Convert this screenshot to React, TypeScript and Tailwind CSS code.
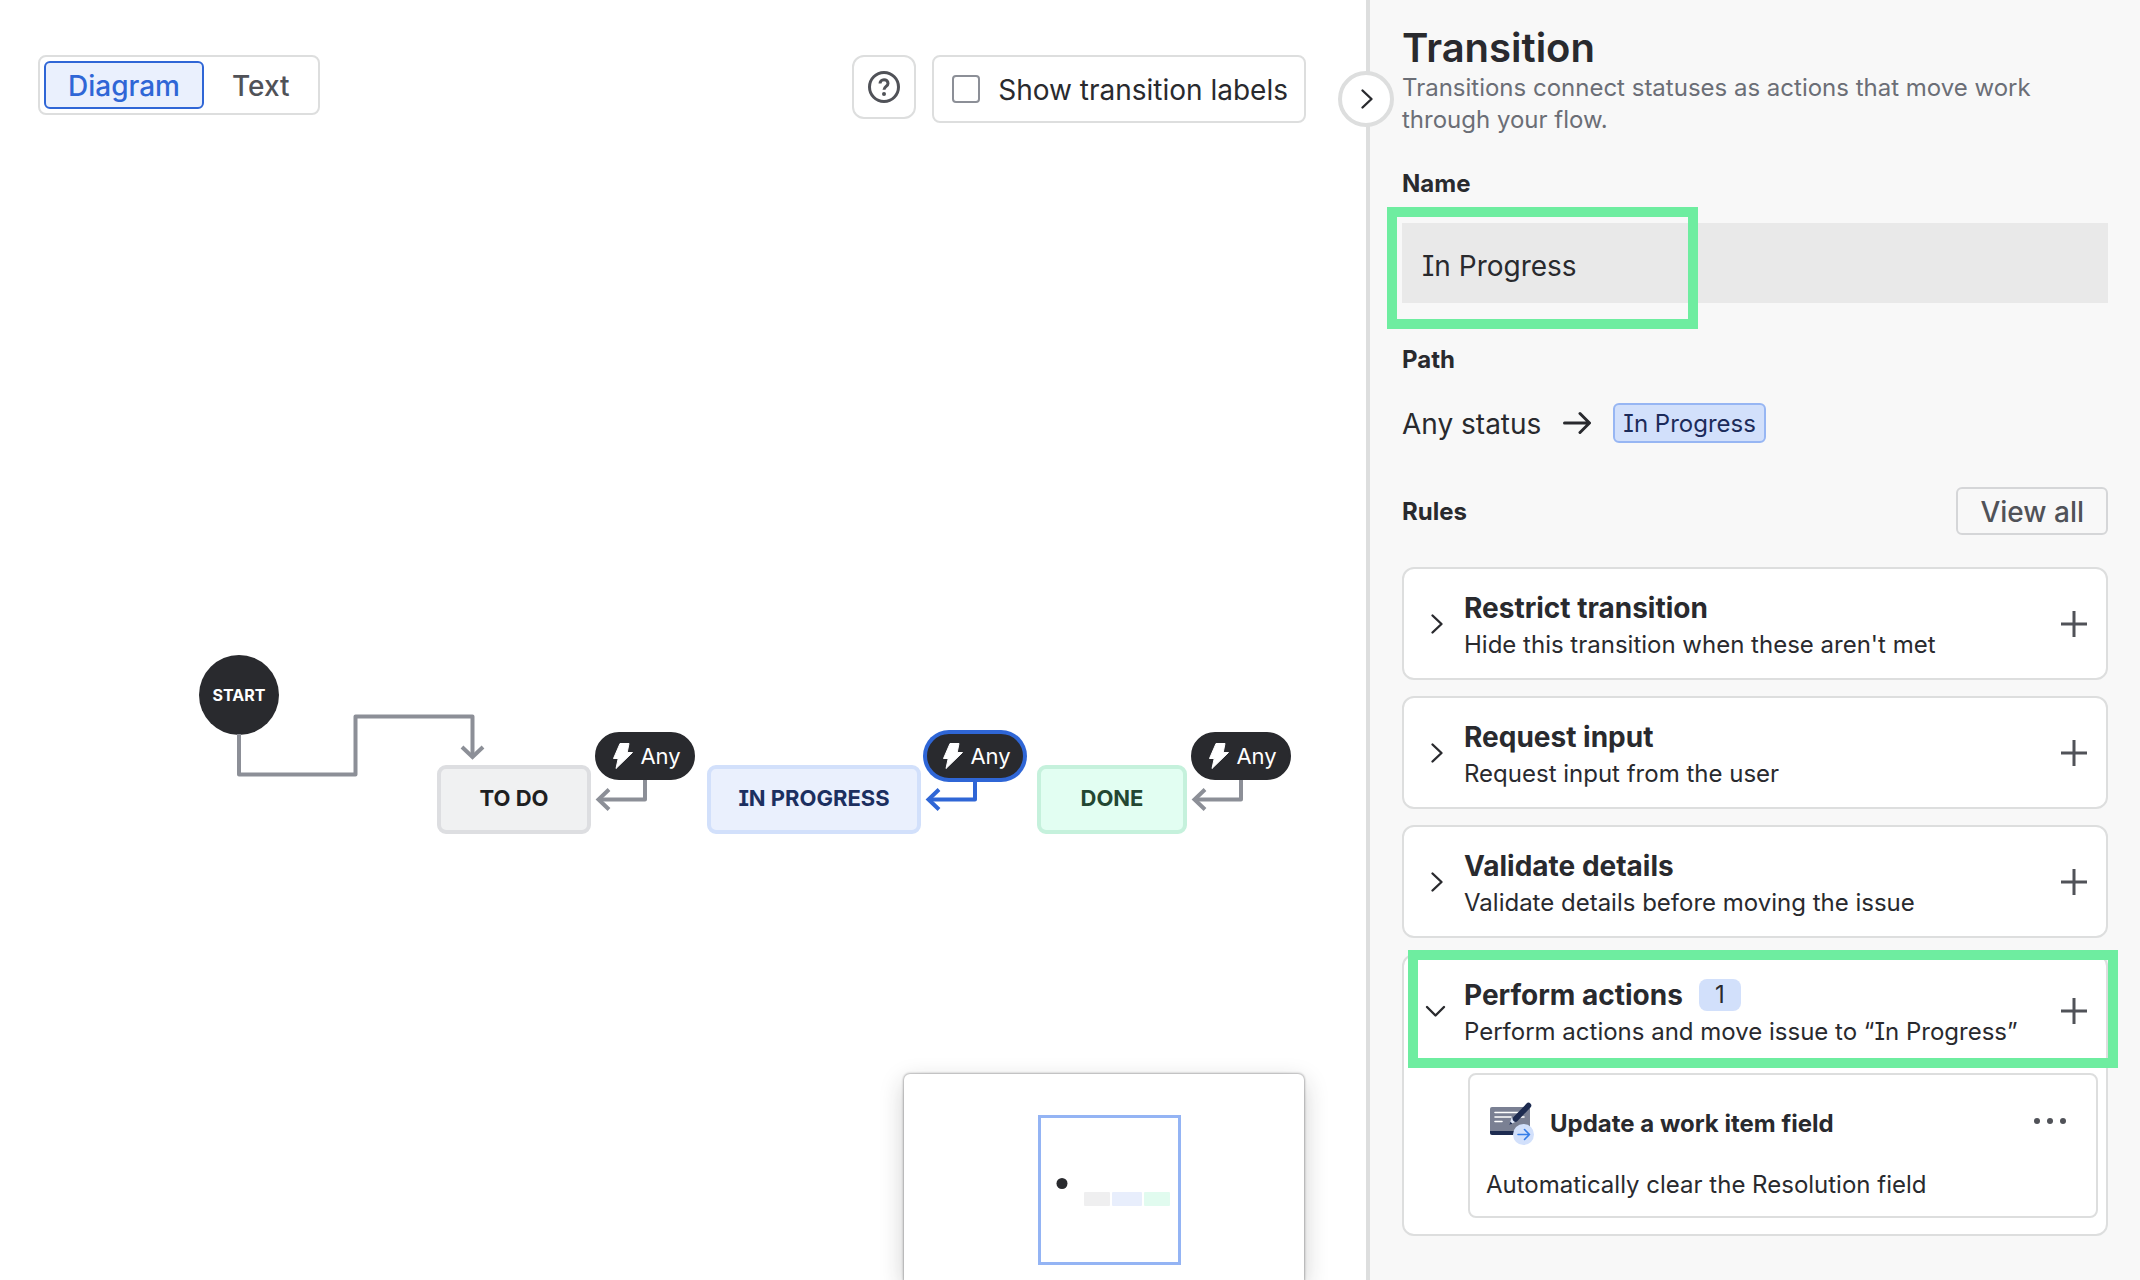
import { useState, type ReactNode } from 'react';

const LINE = '#8C8F97';
const LINE_ACTIVE = '#2F66D6';

const RULES = [
  { title: 'Restrict transition', text: "Hide this transition when these aren't met" },
  { title: 'Request input', text: 'Request input from the user' },
  { title: 'Validate details', text: 'Validate details before moving the issue' },
];

function ChevronIcon({ open = false }: { open?: boolean }) {
  return (
    <svg width="24" height="24" viewBox="0 0 24 24" fill="none" stroke="#292A2E" strokeWidth="2.4" strokeLinecap="round" strokeLinejoin="round">
      {open ? <path d="M3 8l8.500 8.500L20 8" /> : <path d="M8.500 3.500l9 8.500-9 8.500" />}
    </svg>
  );
}

function PlusIcon() {
  return (
    <svg width="26" height="26" viewBox="0 0 26 26" stroke="#505258" strokeWidth="3">
      <path d="M13 0v26M0 13h26" />
    </svg>
  );
}

function HelpIcon() {
  return (
    <svg width="32" height="32" viewBox="0 0 32 32" fill="none" stroke="#505258" strokeWidth="3">
      <circle cx="16" cy="16" r="14.5" />
      <path d="M12 12.6c0-2.3 1.7-3.9 4-3.9s4 1.5 4 3.7c0 2.9-4 3.1-4 6.4" />
      <circle cx="16" cy="23" r="2" fill="#505258" stroke="none" />
    </svg>
  );
}

function BoltIcon() {
  return (
    <svg width="20" height="26" viewBox="0 0 20 26" fill="#fff" stroke="#fff" strokeLinejoin="round">
      <path d="M7 .5h9L14.2 9.500h5.300L3 25.500 5.200 15.500H.5z" />
    </svg>
  );
}

function FieldIcon() {
  return (
    <svg width="44" height="44" viewBox="0 0 44 44" fill="none">
      <rect x="0" y="5" width="40" height="27" rx="2" fill="#7A8093" />
      <path d="M0 29h40v2a2 2 0 0 1-2 2H2a2 2 0 0 1-2-2z" fill="#1D2B50" />
      <path d="M5 10.500h24M5 15h16M5 19.500h7M31 15h3" stroke="#fff" strokeWidth="1.600" strokeLinecap="round" />
      <path d="M21.500 15.500l4.500 4-6.500 3.500z" fill="#DDE6F8" />
      <path d="M38.500 3.500L25.500 17" stroke="#1D2B50" strokeWidth="5.500" strokeLinecap="round" />
      <path d="M19.200 23l1.200-3.200 2.200 2z" fill="#1D2B50" />
      <circle cx="33.500" cy="32.500" r="10.500" fill="#D2E0FB" />
      <path d="M28 32.500h11.500M34.500 27.500l5 5-5 5" stroke="#357DE8" strokeWidth="1.600" strokeLinecap="round" strokeLinejoin="round" />
    </svg>
  );
}

function AnyPill({ className, selected = false }: { className: string; selected?: boolean }) {
  return (
    <button
      className={`absolute top-[732px] flex h-12 w-[100px] items-center justify-center gap-[7px] rounded-full border-2 bg-[#292A2E] pl-1 text-[22px] text-white ${
        selected ? 'border-[#2F66D6] ring-2 ring-[#2F66D6]' : 'border-[#292A2E]'
      } ${className}`}
    >
      <BoltIcon />
      Any
    </button>
  );
}

function StatusNode({ className, children }: { className: string; children: ReactNode }) {
  return (
    <div
      className={`absolute top-[765px] flex h-[69px] items-center justify-center rounded-[9px] border-4 pb-0.5 text-[22px] font-bold ${className}`}
    >
      {children}
    </div>
  );
}

function Diagram() {
  return (
    <div className="absolute inset-0">
      <div className="absolute left-[199px] top-[655px] flex size-20 items-center justify-center rounded-full bg-[#292A2E] text-[16px] font-bold text-white">
        START
      </div>
      <StatusNode className="left-[437px] w-[154px] border-[#DDDEE1] bg-[#F0F1F2] text-[#1E1F21]">TO DO</StatusNode>
      <StatusNode className="left-[707px] w-[214px] border-[#D2E0FB] bg-[#EAF0FD] text-[#1C2F60]">IN PROGRESS</StatusNode>
      <StatusNode className="left-[1037px] w-[150px] border-[#C5F1DC] bg-[#E2FEF2] text-[#234732]">DONE</StatusNode>
      <svg className="absolute left-0 top-0" width="1340" height="860" fill="none" stroke={LINE} strokeWidth="4">
        <path d="M239 734V774.500H355.500V716.500H472.500V756" strokeLinejoin="round" />
        <path d="M462 747l10.500 10 10.500-10" />
        <path d="M645 778V799.500H600" strokeLinejoin="round" />
        <path d="M609 789.500l-10.500 10 10.500 10" />
        <path d="M1241 778V799.500H1196" strokeLinejoin="round" />
        <path d="M1205 789.500l-10.500 10 10.500 10" />
        <g stroke={LINE_ACTIVE}>
          <path d="M975 778V799.500H931" strokeLinejoin="round" />
          <path d="M939 789.500l-10.500 10 10.500 10" />
        </g>
      </svg>
      <AnyPill className="left-[595px]" />
      <AnyPill className="left-[925px]" selected />
      <AnyPill className="left-[1191px]" />
    </div>
  );
}

function Minimap() {
  return (
    <div className="absolute right-[62px] bottom-0 flex h-[206px] w-[400px] justify-center rounded-t-md bg-white pt-10 shadow-[0_0_2px_1px_rgba(30,31,33,0.3),0_8px_24px_rgba(30,31,33,0.22)]">
      <svg width="146" height="152" viewBox="0 0 146 152" fill="none" className="ml-3">
        <rect x="2.500" y="2.500" width="140" height="147" stroke="#94B4F4" strokeWidth="3" />
        <circle cx="25" cy="69.500" r="5.500" fill="#292A2E" />
        <rect x="47" y="78" width="26" height="14" rx="1" fill="#EFEFF0" />
        <rect x="75" y="78" width="30" height="14" rx="1" fill="#E8EEFC" />
        <rect x="107" y="78" width="26" height="14" rx="1" fill="#E1FBEF" />
      </svg>
    </div>
  );
}

function RuleHeader({ title, text, count, open }: { title: string; text: string; count?: number; open?: boolean }) {
  return (
    <div className="flex min-h-[109px] items-center pr-[19px] pl-5">
      <button aria-label={title} aria-expanded={!!open} className="mr-4">
        <ChevronIcon open={open} />
      </button>
      <div className="flex-1 pt-0.5">
        <h3 className="flex h-10 items-center gap-4 text-[28px] font-[650]">
          {title}
          {count !== undefined && (
            <span className="flex h-8 items-center rounded-lg bg-[#D2E0FB] px-4 text-2xl font-normal">{count}</span>
          )}
        </h3>
        <p className="pt-px text-2xl leading-8">{text}</p>
      </div>
      <button aria-label={`Add to ${title}`}>
        <PlusIcon />
      </button>
    </div>
  );
}

export default function App() {
  const [showLabels, setShowLabels] = useState(false);
  const [name, setName] = useState('In Progress');

  return (
    <div className="flex h-screen overflow-hidden bg-white font-[Inter,'Liberation_Sans',sans-serif] text-[#292A2E] [font-feature-settings:'cv08']">
      <main className="relative min-w-0 flex-1">
        <Diagram />
        <div className="relative flex items-start justify-between pt-[55px] pr-[60px] pl-[38px]">
          <div className="flex gap-1 rounded-lg border-2 border-[#DDDEDE] p-1 text-[28px] leading-[42px] font-medium">
            <button className="rounded-md border-2 border-[#2F66D6] bg-[#EAF0FD] px-[22px] pt-0.5 text-[#2F66D6]">Diagram</button>
            <button className="border-y-2 border-transparent px-6 pt-0.5 text-[#505258]">Text</button>
          </div>
          <div className="flex items-start gap-4">
            <button aria-label="Help" className="flex size-16 items-center justify-center rounded-xl border-2 border-[#DDDEDE]">
              <HelpIcon />
            </button>
            <label className="flex h-[68px] items-center gap-[18px] rounded-lg border-2 border-[#DDDEDE] pr-4 pl-[18px] text-[28px]">
              <input
                type="checkbox"
                checked={showLabels}
                onChange={(e) => setShowLabels(e.target.checked)}
                className="size-7 appearance-none rounded border-2 border-[#8C8F97] checked:bg-[#2F66D6]"
              />
              <span className="pt-0.5">Show transition labels</span>
            </label>
          </div>
        </div>
        <Minimap />
      </main>

      <aside className="relative w-[774px] shrink-0 border-l-4 border-[#DDDEDE] bg-[#F8F8F8] pt-6 pr-8 pl-8">
        <button
          aria-label="Collapse panel"
          className="absolute top-[71px] -left-[32px] flex size-14 items-center justify-center rounded-full border-4 border-[#DDDEDE] bg-white"
        >
          <ChevronIcon />
        </button>

        <h1 className="text-[40px] leading-[48px] font-semibold">Transition</h1>
        <p className="text-2xl leading-8 text-[#6B6E76]">
          Transitions connect statuses as actions that move work through your flow.
        </p>

        <label htmlFor="name" className="mt-8 block text-2xl leading-8 font-[650]">
          Name
        </label>
        <div className="relative mt-[23px]">
          <input
            id="name"
            value={name}
            onChange={(e) => setName(e.target.value)}
            className="block h-20 w-full bg-[#E9E9E9] px-5 pt-[6px] text-[28px] outline-none"
          />
          <div className="pointer-events-none absolute -top-4 -left-[15px] h-[122px] w-[311px] border-10 border-[#6EEDA0]" />
        </div>

        <h2 className="mt-[41px] text-2xl leading-8 font-[650]">Path</h2>
        <div className="mt-[27px] flex h-10 items-center text-[28px]">
          <span className="pt-0.5">Any status</span>
          <svg width="28" height="24" viewBox="0 0 28 24" fill="none" stroke="#292A2E" strokeWidth="3" className="mx-[22px]" strokeLinecap="round" strokeLinejoin="round">
            <path d="M1.500 12h24.500M17 2.500l9.500 9.500-9.500 9.500" />
          </svg>
          <span className="rounded-md border-2 border-[#97B6F3] bg-[#D2E0FB] px-2 pt-0.5 text-2xl leading-[34px] text-[#1C2B5A]">In Progress</span>
        </div>

        <div className="mt-11 flex items-center justify-between">
          <h2 className="pt-0.5 text-2xl leading-8 font-[650]">Rules</h2>
          <button className="rounded-md border-2 border-[#D5D6D8] px-[22px] pt-0.5 text-[28px] leading-[42px] font-medium text-[#505258]">
            View all
          </button>
        </div>

        <div className="mt-8 flex flex-col gap-4">
          {RULES.map((rule) => (
            <section key={rule.title} className="rounded-xl border-2 border-[#DDDEDE] bg-white">
              <RuleHeader title={rule.title} text={rule.text} />
            </section>
          ))}
          <section className="relative rounded-xl border-2 border-[#DDDEDE] bg-white pb-4">
            <RuleHeader title="Perform actions" text="Perform actions and move issue to “In Progress”" count={1} open />
            <div className="pointer-events-none absolute -top-[6px] -right-3 left-1 h-[118px] border-10 border-[#6EEDA0]" />
            <div className="mt-2 mr-2 ml-16 rounded-lg border-2 border-[#DDDEDE] px-4 pt-[27px] pb-[15px]">
              <div className="flex items-center pl-1">
                <FieldIcon />
                <h4 className="ml-4 flex-1 text-2xl leading-8 font-[650]">Update a work item field</h4>
                <button aria-label="More actions" className="mr-3">
                  <svg width="36" height="24" viewBox="0 0 36 24" fill="#505258">
                    <circle cx="5" cy="9" r="3" />
                    <circle cx="18" cy="9" r="3" />
                    <circle cx="31" cy="9" r="3" />
                  </svg>
                </button>
              </div>
              <p className="mt-[23px] text-2xl leading-8">Automatically clear the Resolution field</p>
            </div>
          </section>
        </div>
      </aside>
    </div>
  );
}
